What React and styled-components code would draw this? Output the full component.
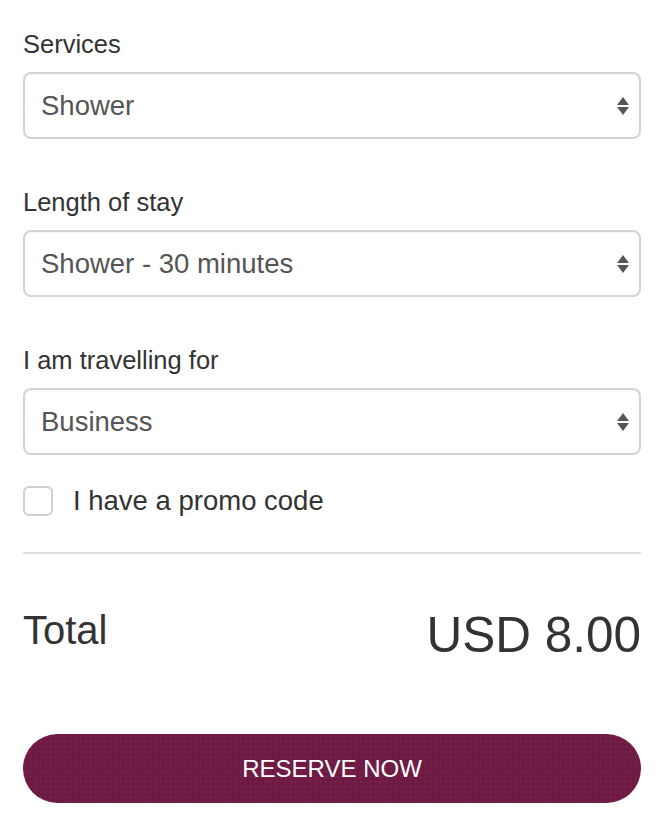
import React, { useState } from "react";
import styled, { createGlobalStyle } from "styled-components";

const GlobalStyle = createGlobalStyle`
  body {
    margin: 0;
    background: #fff;
    font-family: "Liberation Sans", Arial, Helvetica, sans-serif;
  }
`;

const Form = styled.div`
  padding: 30px 25px 30px 23px;
  width: 666px;
  box-sizing: border-box;
`;

const Field = styled.div`
  margin-bottom: ${(p) => (p.last ? "30px" : "49px")};
`;

const Label = styled.label`
  display: block;
  font-size: 25.5px;
  line-height: 28px;
  color: #333;
  margin-bottom: 14px;
`;

const SelectWrap = styled.div`
  position: relative;
`;

const Select = styled.select`
  appearance: none;
  -webkit-appearance: none;
  width: 100%;
  height: 67px;
  box-sizing: border-box;
  border: 2px solid #d4d4d4;
  border-radius: 8px;
  background: #fff;
  padding: 0 40px 0 16px;
  font-family: "Liberation Sans", Arial, sans-serif;
  font-size: 27.5px;
  color: #555;
  box-shadow: inset 0 1px 1px rgba(0, 0, 0, 0.04);
  outline: none;
`;

const Arrows = styled.svg`
  position: absolute;
  right: 10px;
  top: 50%;
  transform: translateY(-50%);
  pointer-events: none;
`;

const CheckRow = styled.label`
  display: flex;
  align-items: center;
  gap: 20px;
  font-size: 27.5px;
  color: #333;
  cursor: pointer;
`;

const Box = styled.span`
  width: 30px;
  height: 30px;
  box-sizing: border-box;
  border: 2px solid #d0d0d0;
  border-radius: 6px;
  background: ${(p) => (p.checked ? "#6e1a43" : "#fff")};
`;

const Divider = styled.hr`
  border: none;
  border-top: 2px solid #e0e0e0;
  margin: 35px 0 53px;
`;

const TotalRow = styled.div`
  display: flex;
  justify-content: space-between;
  align-items: flex-start;
  color: #333;
`;

const TotalLabel = styled.div`
  font-size: 40px;
  line-height: 46px;
`;

const Amount = styled.div`
  font-size: 49.5px;
  line-height: 56px;
`;

const Button = styled.button`
  display: block;
  width: 100%;
  height: 69px;
  margin-top: 71px;
  border: none;
  border-radius: 35px;
  background-color: #6e1a43;
  background-image: radial-gradient(rgba(255, 255, 255, 0.05) 1px, transparent 1px);
  background-size: 5px 5px;
  color: #fff;
  font-family: "Liberation Sans", Arial, sans-serif;
  font-size: 24px;
  cursor: pointer;
`;

const SelectField = ({ label, options, last }) => (
  <Field last={last}>
    <Label>{label}</Label>
    <SelectWrap>
      <Select defaultValue={options[0]}>
        {options.map((o) => (
          <option key={o}>{o}</option>
        ))}
      </Select>
      <Arrows width="16" height="22" viewBox="0 0 16 22">
        <path d="M8 2 L14 10 H2 Z" fill="#555" />
        <path d="M2 12 H14 L8 20 Z" fill="#555" />
      </Arrows>
    </SelectWrap>
  </Field>
);

export default function App() {
  const [promo, setPromo] = useState(false);
  return (
    <>
      <GlobalStyle />
      <Form>
        <SelectField label="Services" options={["Shower", "Lounge", "Nap room"]} />
        <SelectField
          label="Length of stay"
          options={["Shower - 30 minutes", "Shower - 60 minutes"]}
        />
        <SelectField label="I am travelling for" options={["Business", "Leisure"]} last />
        <CheckRow onClick={() => setPromo(!promo)}>
          <Box checked={promo} />
          I have a promo code
        </CheckRow>
        <Divider />
        <TotalRow>
          <TotalLabel>Total</TotalLabel>
          <Amount>USD 8.00</Amount>
        </TotalRow>
        <Button>RESERVE NOW</Button>
      </Form>
    </>
  );
}
